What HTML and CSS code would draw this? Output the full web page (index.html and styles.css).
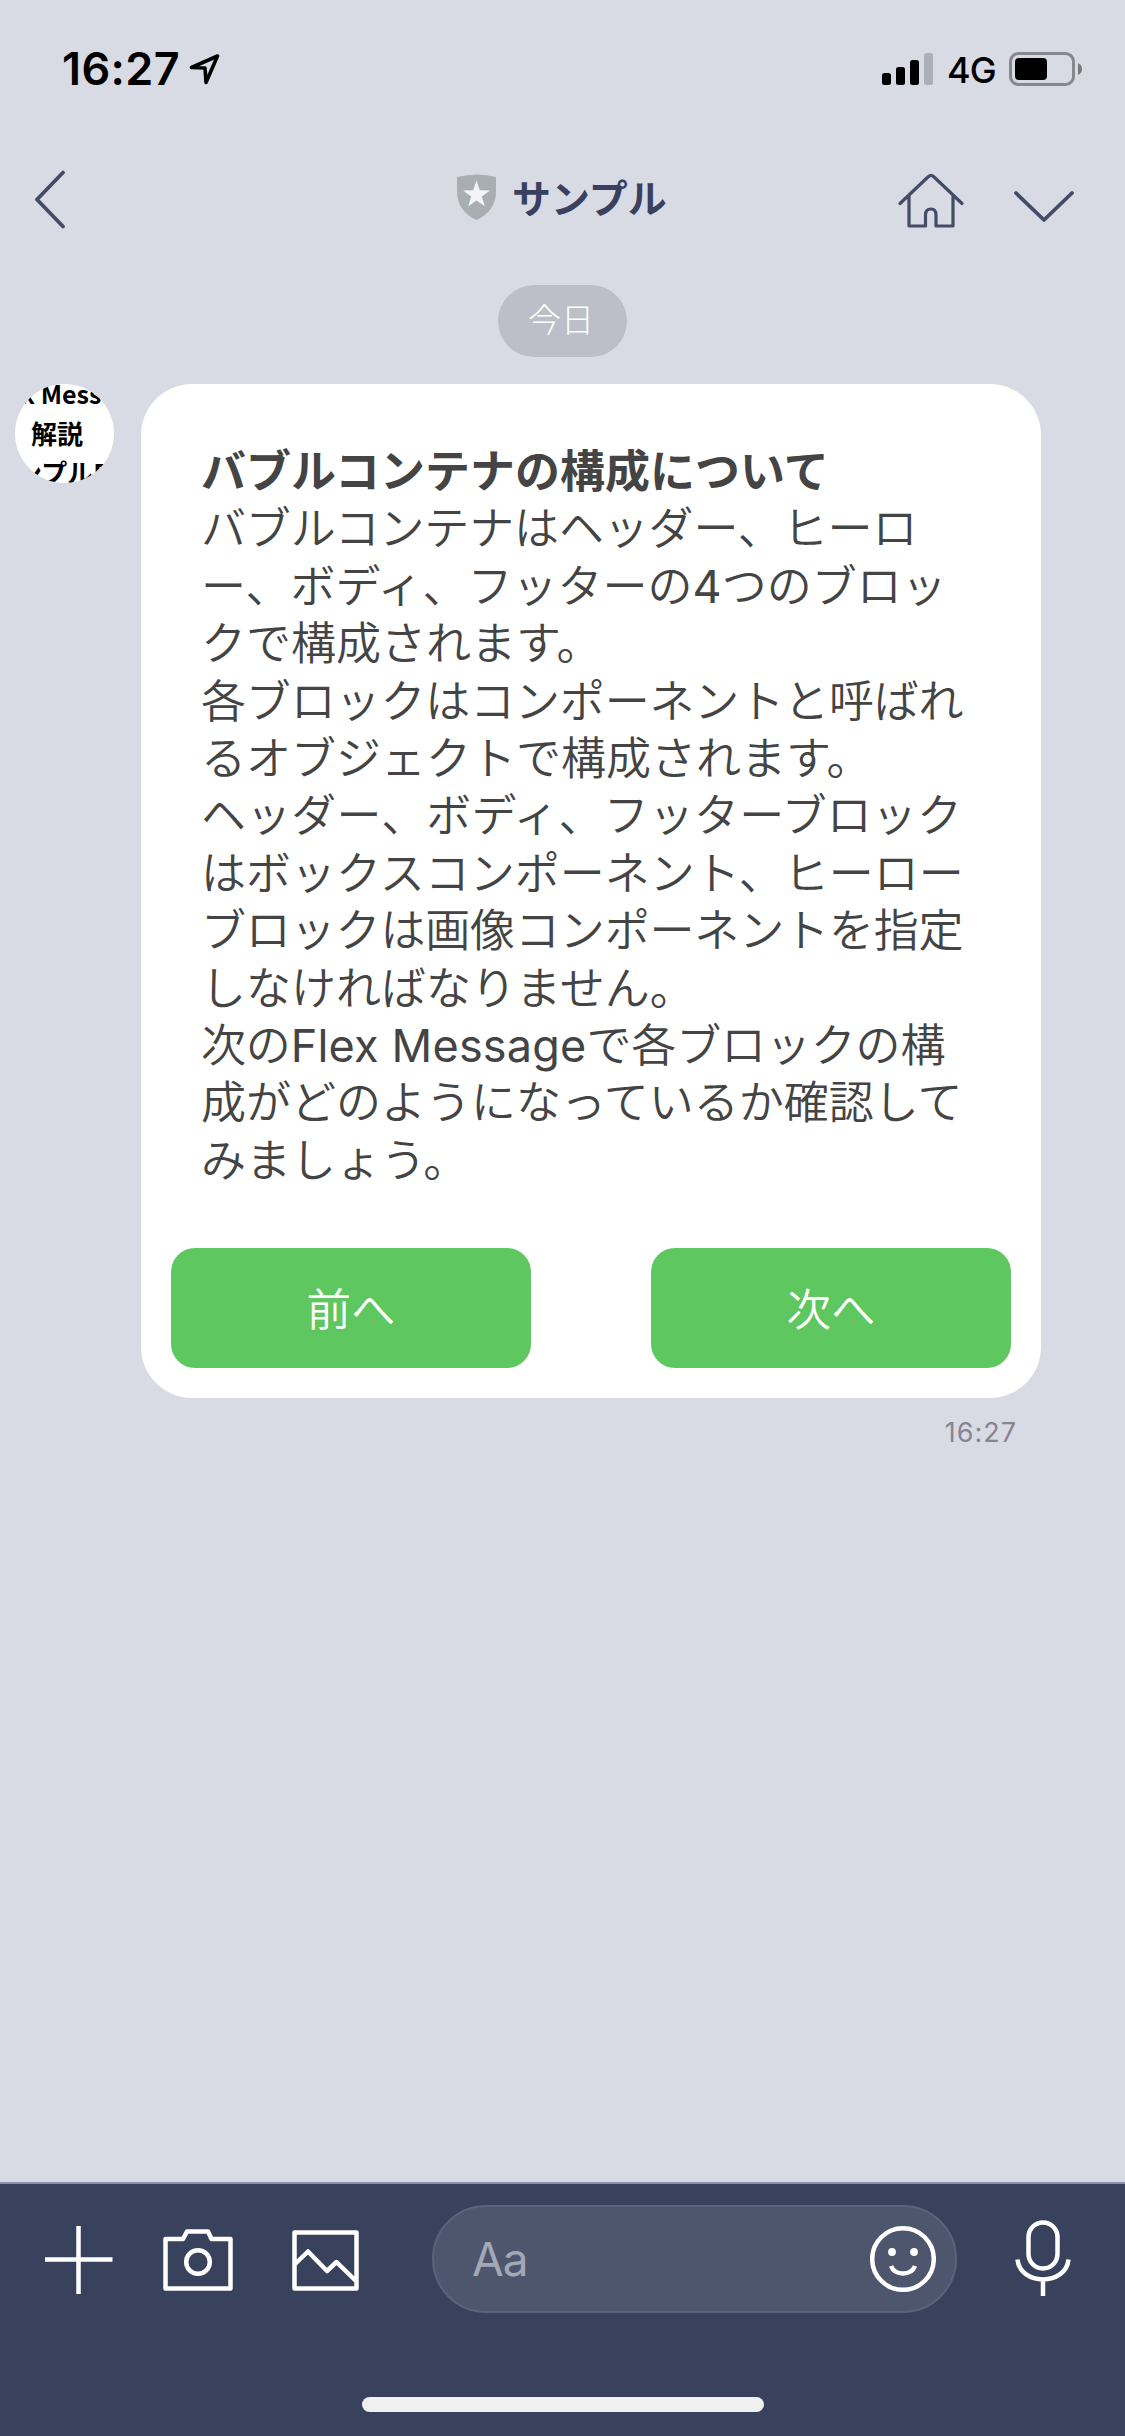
FILE: index.html
```html
<!DOCTYPE html>
<html lang="ja">
<head>
<meta charset="utf-8">
<title>サンプル</title>
<link rel="stylesheet" href="styles.css">
</head>
<body>
<div class="screen">
  <div class="status">
    <span class="clock">16:27</span>
    <svg class="location" width="34" height="34" viewBox="0 0 34 34"><path d="M3.500 15.500 L29.5 4 L18 30.500 L17 16 Z"/></svg>
    <svg class="signal" width="51" height="32" viewBox="0 0 51 32"><rect x="0" y="20" width="9" height="12" rx="2.500"/><rect x="14" y="14" width="9" height="18" rx="2.500"/><rect x="28" y="7" width="9" height="25" rx="2.500"/><rect class="off" x="42" y="0" width="9" height="32" rx="2.500"/></svg>
    <span class="network">4G</span>
    <svg class="battery" width="74" height="34" viewBox="0 0 74 34"><rect class="shell" x="1.500" y="1.500" width="63" height="31" rx="8"/><rect x="6" y="6" width="32" height="22" rx="4"/><path class="nub" d="M69 11 Q73 13 73 17 Q73 21 69 23 Z"/></svg>
  </div>

  <header class="nav">
    <svg class="back" width="32" height="60" viewBox="0 0 32 60"><path d="M29 2.500 L3 29.500 L29 56.500"/></svg>
    <div class="title">
      <svg width="40" height="46" viewBox="0 0 40 46"><path class="shield" d="M0 3 Q20 -2 39 3 V17 Q39 37 19.500 46 Q0 37 0 17 Z"/><path class="star" d="M19.500 6.500 L22.800 16.200 L33 16.400 L24.800 22.500 L27.800 32.200 L19.500 26.400 L11.200 32.200 L14.200 22.500 L6 16.400 L16.200 16.200 Z"/></svg>
      <h1>サンプル</h1>
    </div>
    <svg class="home" width="68" height="60" viewBox="0 0 68 60"><path d="M3 32.500 L31.500 5.500 Q34 3 36.500 5.500 L65 32.500 M12 25 V55 H28.500 V44 Q28.500 38 34 38 Q39 38 39 44 V55 H56 V25"/></svg>
    <svg class="down" width="62" height="34" viewBox="0 0 62 34"><path d="M3 3 L31 30 L59 3"/></svg>
  </header>

  <main class="chat">
    <div class="date">今日</div>
    <div class="message">
      <div class="avatar"><span class="a1">x Mess</span><span class="a2">解説</span><span class="a3">ンプルB</span></div>
      <div class="column">
        <article class="bubble">
          <div class="text">
            <h2>バブルコンテナの構成について</h2>
            <p class="tight">バブルコンテナはヘッダー、ヒーロ</p>
            <p>ー、ボディ、フッターの<span class="latin">4</span>つのブロッ</p>
            <p>クで構成されます。</p>
            <p class="tight">各ブロックはコンポーネントと呼ばれ</p>
            <p>るオブジェクトで構成されます。</p>
            <p class="wide">ヘッダー、ボディ、フッターブロック</p>
            <p>はボックスコンポーネント、ヒーロー</p>
            <p class="tight">ブロックは画像コンポーネントを指定</p>
            <p>しなければなりません。</p>
            <p class="tight">次の<span class="latin">Flex Message</span>で各ブロックの構</p>
            <p>成がどのようになっているか確認して</p>
            <p>みましょう。</p>
          </div>
          <div class="actions"><button>前へ</button><button>次へ</button></div>
        </article>
        <time>16:27</time>
      </div>
    </div>
  </main>

  <footer class="composer">
    <div class="tools">
      <svg class="plus" width="68" height="68" viewBox="0 0 68 68"><path d="M33.500 0 V68 M0 33.500 H67.500"/></svg>
      <svg class="camera" width="70" height="62" viewBox="0 0 70 62"><path d="M2.500 10 H20 L24 2.500 H45 L48.500 10 H67.500 V59.500 H2.500 Z"/><circle cx="35" cy="33" r="11.800"/></svg>
      <svg class="picture" width="67" height="61" viewBox="0 0 67 61"><path d="M2.500 2.500 H64.500 V58.500 H2.500 Z M3 34 L16 21.500 L35 41 L44.500 32 L64.500 51.500"/></svg>
      <div class="field"><span>Aa</span>
        <svg width="66" height="68" viewBox="0 0 66 68"><circle cx="33" cy="34" r="30.800"/><circle class="eye" cx="22" cy="27" r="3.900"/><circle class="eye" cx="44" cy="27" r="3.900"/><path d="M21 41 C25 51 41 51 45 41"/></svg>
      </div>
      <svg class="mic" width="56" height="76" viewBox="0 0 56 76"><rect x="13.500" y="2.500" width="29" height="46" rx="14.500"/><path d="M2.500 39.500 C5 66 51 66 53.500 39.500 M28 60 V76"/></svg>
    </div>
    <div class="indicator"></div>
  </footer>
</div>
</body>
</html>
```
FILE: styles.css
```css
* { box-sizing: border-box; margin: 0; padding: 0; }
body { width: 1125px; height: 2436px; font-family: Inter, "Noto Sans CJK JP", sans-serif; }
svg { display: block; flex: none; fill: none; }
.screen { display: flex; flex-direction: column; width: 1125px; height: 2436px; background: #d8dbe4; overflow: hidden; }

.status { display: flex; align-items: center; height: 138px; padding: 0 42px 0 62px; color: #000; }
.clock { width: 126px; font-size: 45px; font-weight: 600; line-height: 60px; letter-spacing: 0.4px; white-space: nowrap; }
.location { stroke: #000; stroke-width: 3.600; stroke-linejoin: round; }
.signal { margin-left: auto; fill: #000; }
.signal .off { fill: #acafb7; }
.network { width: 50px; margin: 1px 12px 0 14px; font-size: 36px; font-weight: 500; line-height: 50px; letter-spacing: -1px; }
.battery { fill: #000; }
.battery .shell { fill: none; stroke: #87888d; stroke-width: 3; }
.battery .nub { fill: #77797f; }

.nav { display: grid; grid-template-columns: 32px 1fr 68px 62px; height: 147px; padding: 0 50px 0 34px; }
.nav > svg { stroke: #434b67; stroke-width: 3.800; stroke-linecap: round; stroke-linejoin: round; }
.back { margin-top: 32px; }
.title { display: flex; align-items: flex-start; gap: 15px; padding: 36px 0 0 391px; }
.shield { fill: #a9aeb2; }
.star { fill: #f4f4f6; }
.title h1 { padding-top: 2px; color: #39415f; font-size: 39px; font-weight: 700; line-height: 46px; white-space: nowrap; }
.nav .home { margin: 33px 0 0 -48px; stroke-width: 3.200; }
.nav .down { margin-top: 52px; }

.chat { flex: 1; }
.date { display: flex; justify-content: center; width: 129px; height: 72px; margin: 0 auto 27px; padding-right: 3px; border-radius: 36px; background: #bcbfc8; color: #fff; font-size: 33px; font-weight: 300; line-height: 70px; }
.message { display: flex; align-items: flex-start; gap: 27px; padding-left: 15px; }
.avatar { display: flex; flex-direction: column; width: 99px; height: 99px; border-radius: 50%; background: #fff; overflow: hidden; color: #000; font: 700 26px/39px "Noto Sans CJK JP", sans-serif; white-space: nowrap; }
.avatar span { display: block; flex: none; }
.a1 { margin-top: -10px; padding-left: 6px; font-size: 25px; }
.a2 { padding-left: 16px; }
.a3 { padding-left: 1px; }
.column { width: 900px; }
.bubble { height: 1014px; padding: 59px 30px 30px; border-radius: 51px; background: #fff; }
.text { height: 805px; padding-left: 30px; color: #444; font-size: 45px; line-height: 57.400px; }
.text h2 { font-size: 45px; line-height: 57.400px; font-weight: 700; white-space: nowrap; }
.text p { font-weight: 350; white-space: nowrap; }
.text .tight { letter-spacing: -0.15px; }
.text .wide { letter-spacing: 0.15px; }
.latin { font-weight: 400; letter-spacing: 0.2px; }
.actions { display: flex; justify-content: space-between; }
.actions button { width: 360px; height: 120px; padding-top: 4px; border: 0; border-radius: 24px; background: #5ec760; color: #fff; font: 350 44.500px/60px Inter, "Noto Sans CJK JP", sans-serif; }
.column time { display: block; margin-top: 16px; padding-right: 24px; color: #85868f; text-align: right; font-size: 27px; line-height: 38px; letter-spacing: 1px; }

.composer { height: 254px; border-top: 2px solid #8b8fa1; background: #39425c; }
.tools { display: flex; align-items: flex-start; height: 213px; padding: 21px 0 0 45px; }
.tools svg { stroke: #fff; stroke-width: 4.500; stroke-linejoin: round; }
.plus { margin-top: 21px; }
.camera { margin: 24px 0 0 50px; }
.picture { margin: 25px 0 0 59px; }
.field { display: flex; align-items: center; justify-content: space-between; width: 525px; height: 108px; margin-left: 73px; padding: 0 19px 0 38px; border: 2px solid #5b637a; border-radius: 54px; background: #4e566d; color: #a3a8b6; font-size: 46px; letter-spacing: -1px; }
.field .eye { fill: #fff; stroke: none; }
.mic { margin: 15px 0 0 58px; }
.indicator { width: 402px; height: 15px; margin: 0 auto; border-radius: 8px; background: #f0f0f0; }
```
